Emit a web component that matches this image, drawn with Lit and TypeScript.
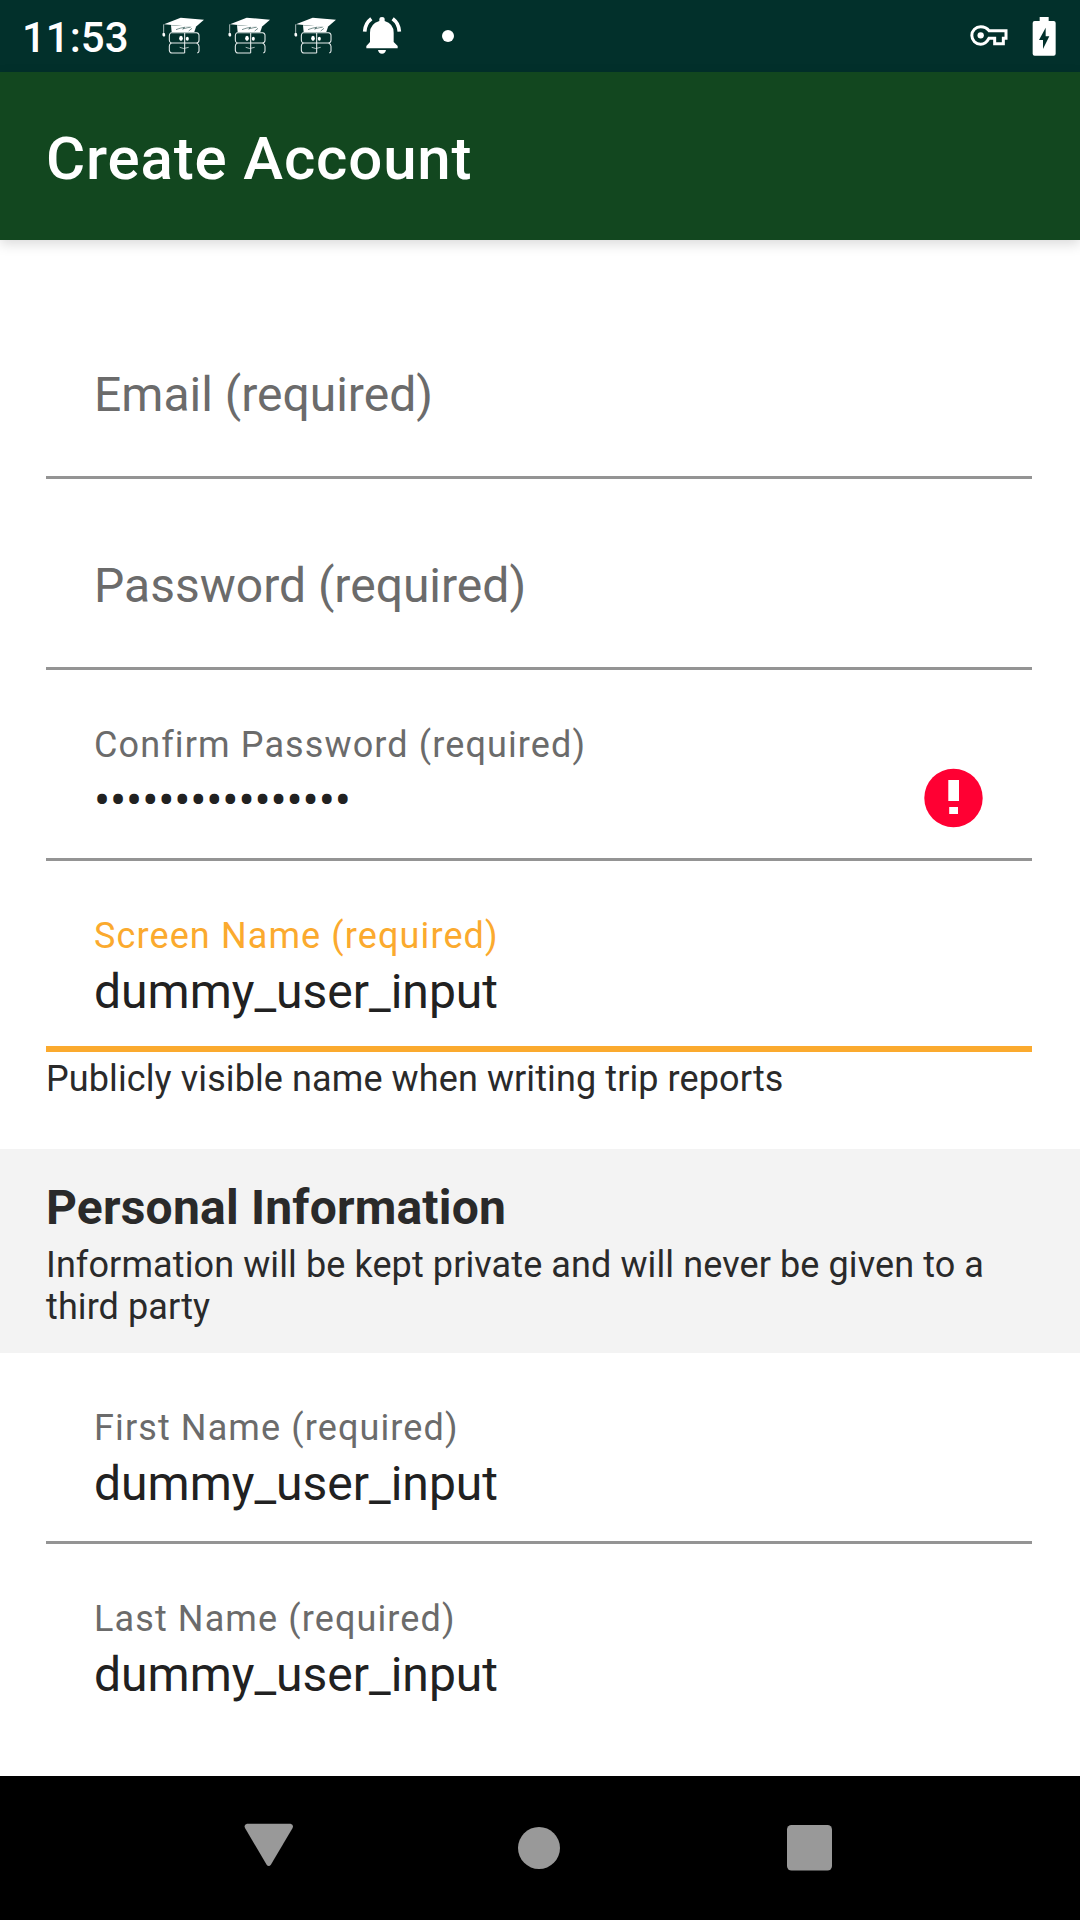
import { LitElement, html, css, svg, nothing } from "lit";
import { customElement, property } from "lit/decorators.js";

const graduate = svg`
  <path d="M6 22 L56 2 L126 8 L100 31 Z" fill="#fff"/>
  <path d="M27 25 L102 29 L97 45 H29 Z" fill="#fff"/>
  <path d="M42 38 C52 34 60 32 68 31 L62 36 C72 33 80 31 86 31 M80 42 L90 34" fill="none" stroke="#02302b" stroke-width="1.6"/>
  <path d="M5 22 V48" stroke="#fff" stroke-width="2"/>
  <path d="M2 48 H8 L10 55 L6 60 L1 55 Z" fill="#fff"/>
  <g fill="none" stroke="#e6ecec" stroke-width="3.2">
    <path d="M68 47 H27 Q22 50 22 56 V70 Q22 77 28 78 H104 Q111 77 111 70 V55 Q111 48 104 47 H68 V108"/>
    <path d="M28 78 Q22 81 22 87 V100 Q23 108 30 108 H68 M104 78 Q111 82 111 88 V102 Q111 106 106 108"/>
    <path d="M53 91 Q64 98 80 91" stroke-width="2.2"/>
  </g>
  <ellipse cx="57" cy="64" rx="5.5" ry="8" fill="#fff"/>
  <ellipse cx="76" cy="65" rx="4.5" ry="6" fill="#fff"/>`;

@customElement("status-bar")
export class StatusBar extends LitElement {
  static styles = css`
    :host { display: flex; align-items: center; height: 72px; background: #02302b; color: #fff; box-sizing: border-box; padding-left: 22px; padding-right: 24px; }
    .clock { font-size: 42px; font-weight: 500; line-height: 50px; width: 140px; padding-top: 3px; white-space: nowrap; }
    .notes { display: flex; align-items: center; gap: 24px; flex: 1; }
    .bell { margin-left: 1px; }
    .system { display: flex; align-items: center; gap: 23px; }
    svg { display: block; }
  `;
  render() {
    return html`
      <div class="clock">11:53</div>
      <div class="notes">
        ${[0, 1, 2].map(() => html`<svg width="42" height="38" viewBox="0 0 126 114">${graduate}</svg>`)}
        <svg class="bell" width="42" height="40" viewBox="0 0 126 120">
          <path fill="#fff" d="M55 9 Q55 3 63 3 Q71 3 71 10 V15 Q98 23 98 50 V78 L110 90 V97 H16 V90 L27 78 V50 Q27 24 55 15 Z"/>
          <path fill="#fff" d="M51 102 H75 Q73 113 63 113 Q53 113 51 102 Z"/>
          <path fill="none" stroke="#fff" stroke-width="11" d="M11 47 Q12 22 31 8 M115 47 Q114 22 95 8"/>
        </svg>
        <svg width="60" height="40" viewBox="0 0 60 40"><circle cx="21" cy="20" r="6" fill="#fff"/></svg>
      </div>
      <div class="system">
        <svg width="40" height="24" viewBox="0 0 120 72">
          <path fill="none" stroke="#fff" stroke-width="9" d="M60 20 H111 V43 H103 V59 H77 V43 H60 C54 54 46 61 35 61 A26 26 0 1 1 35 8 C46 8 55 13 60 20 Z"/>
          <circle cx="35" cy="34" r="9.5" fill="#fff"/>
        </svg>
        <svg width="24" height="39" viewBox="0 0 72 117">
          <path fill="#fff" d="M23 0 H50 V12 H65 Q71 12 71 18 V110 Q71 116 65 116 H8 Q2 116 2 110 V18 Q2 12 8 12 H23 Z"/>
          <path fill="#02302b" d="M41 32 V58 H52 L33 96 V69 H21 Z"/>
        </svg>
      </div>`;
  }
}

@customElement("form-field")
export class FormField extends LitElement {
  @property() label = "";
  @property() value = "";
  @property({ type: Boolean }) active = false;
  @property({ type: Boolean }) error = false;
  @property({ type: Boolean }) plain = false;
  @property({ type: Boolean }) secret = false;

  static styles = css`
    :host { display: block; margin: 0 48px 0 46px; }
    .box { display: flex; align-items: flex-start; justify-content: space-between; height: 191px; box-sizing: border-box; padding: 0 49px 0 48px; border-bottom: 3px solid #949494; }
    .box.active { border-bottom: 6px solid #fbaa2e; }
    .box.plain { border-bottom-color: transparent; }
    .texts { display: flex; flex-direction: column; padding-top: 54px; gap: 7px; white-space: nowrap; }
    .texts.empty { padding-top: 79px; }
    .label { font-size: 36px; line-height: 42px; letter-spacing: 1.12px; color: #6b6b6b; }
    .active .label { color: #fbaa2e; }
    .value { font-size: 48px; line-height: 56px; color: #212121; }
    .value.hint { color: #6b6b6b; }
    .value.secret { letter-spacing: -0.15px; }
    .alert { display: block; margin-top: 98px; }
  `;
  render() {
    return html`<div class="box ${this.active ? "active" : ""} ${this.plain ? "plain" : ""}">
      ${this.value
        ? html`<div class="texts">
            <div class="label">${this.label}</div>
            <div class="value ${this.secret ? "secret" : ""}">${this.value}</div>
          </div>`
        : html`<div class="texts empty"><div class="value hint">${this.label}</div></div>`}
      ${this.error
        ? html`<svg class="alert" width="60" height="60" viewBox="0 0 60 60">
            <circle cx="30.5" cy="30" r="29.2" fill="#ff0033"/>
            <path fill="#fff" d="M25.3 12 H36 V33 H25.3 Z M26.2 39 H35 V46 H26.2 Z"/>
          </svg>`
        : nothing}
    </div>`;
  }
}

@customElement("app-root")
export class AppRoot extends LitElement {
  static styles = css`
    :host { display: flex; flex-direction: column; width: 1080px; height: 1920px; overflow: hidden; background: #fff; font-family: Roboto, sans-serif; }
    .appbar { height: 168px; box-sizing: border-box; padding: 52px 46px 0; background: #12471f; color: #fff; font-size: 60px; line-height: 70px; font-weight: 500; letter-spacing: 0.85px; box-shadow: 0 4px 12px rgba(0, 0, 0, 0.15); }
    .form { flex: 1; padding-top: 48px; overflow: hidden; }
    .helper { padding: 6px 46px 49px; font-size: 36px; line-height: 42px; letter-spacing: 0.1px; color: #2a2a2a; }
    .section { height: 204px; box-sizing: border-box; padding: 31px 46px 0; background: #f3f3f3; color: #2a2a2a; }
    .heading { font-size: 48px; line-height: 56px; font-weight: 700; letter-spacing: 0.2px; }
    .note { margin-top: 8px; font-size: 36px; line-height: 42px; letter-spacing: 0.1px; }
    .nav { height: 144px; background: #000; }
    .nav svg { display: block; }
  `;
  render() {
    return html`
      <status-bar></status-bar>
      <div class="appbar">Create Account</div>
      <div class="form">
        <form-field label="Email (required)"></form-field>
        <form-field label="Password (required)"></form-field>
        <form-field label="Confirm Password (required)" value=${"•".repeat(16)} secret error></form-field>
        <form-field label="Screen Name (required)" value="dummy_user_input" active></form-field>
        <div class="helper">Publicly visible name when writing trip reports</div>
        <div class="section">
          <div class="heading">Personal Information</div>
          <div class="note">Information will be kept private and will never be given to a third party</div>
        </div>
        <form-field label="First Name (required)" value="dummy_user_input"></form-field>
        <form-field label="Last Name (required)" value="dummy_user_input" plain></form-field>
      </div>
      <div class="nav">
        <svg width="1080" height="144" viewBox="0 0 1080 144" fill="#999">
          <path d="M247 47.7 H290.5 Q294 48.5 292.6 52 L271 88.5 Q268.7 91.5 266.5 88.5 L245 52 Q243.5 48.5 247 47.7 Z"/>
          <circle cx="539" cy="72" r="21"/>
          <rect x="787" y="49" width="45" height="45.5" rx="4.5"/>
        </svg>
      </div>`;
  }
}
